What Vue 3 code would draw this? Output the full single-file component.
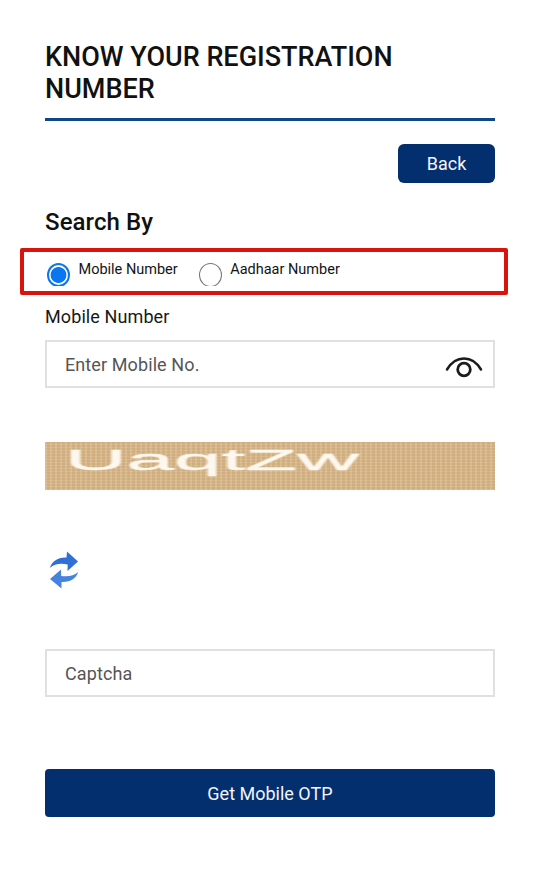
<script setup>
const radios = [
  { label: 'Mobile Number', checked: true },
  { label: 'Aadhaar Number', checked: false }
]
</script>

<template>
  <main class="page">
    <h1 class="title">KNOW YOUR REGISTRATION NUMBER</h1>
    <div class="rule"></div>
    <div class="back-row"><button class="back" type="button">Back</button></div>
    <h2 class="search">Search By</h2>
    <div class="radio-box">
      <div v-for="r in radios" :key="r.label" class="radio-item">
        <span class="radio-clip"><span class="radio" :class="{ on: r.checked }"></span></span>
        <span class="radio-label">{{ r.label }}</span>
      </div>
    </div>
    <label class="field-label">Mobile Number</label>
    <div class="input">
      <span class="placeholder">Enter Mobile No.</span>
      <svg class="eye" viewBox="0 0 38 24" width="38" height="24" fill="none" stroke="#1b1b1b">
        <path d="M2 14.500C6.500 7 12 3.500 19 3.500s12.500 3.500 17 11" stroke-width="2.500" stroke-linecap="round"/>
        <circle cx="19" cy="14.500" r="6.300" stroke-width="2.800"/>
      </svg>
    </div>
    <div class="captcha"><span class="captcha-text">UaqtZw</span></div>
    <svg class="refresh" viewBox="0 0 30 38" width="30" height="38">
      <path fill="#2f70d6" d="M1 17C2.500 10.500 9 6 17.500 6.500L18 .5 29 10.500 18.500 20l.2-6.500C11 12 5.500 13 1 17z"/>
      <path fill="#4683de" d="M29 21C27.500 27.500 21 31.500 12.500 31L12.500 37.500 1 28l11-9.500 .2 6.500C19 26 25 25 29 21z"/>
    </svg>
    <div class="input captcha-input"><span class="placeholder">Captcha</span></div>
    <button class="otp" type="button">Get Mobile OTP</button>
  </main>
</template>

<style scoped>
.page {
  box-sizing: border-box;
  width: 540px;
  height: 894px;
  padding: 41px 45px 0;
  background: #fff;
  font-family: Roboto, "Liberation Sans", sans-serif;
  color: #111;
  overflow: hidden;
}
.title {
  margin: 0;
  font-size: 27px;
  line-height: 32px;
  font-weight: 500;
  color: #111;
}
.rule {
  height: 3px;
  margin-top: 13px;
  background: #0f4688;
}
.back-row {
  display: flex;
  justify-content: flex-end;
  margin-top: 23px;
}
.back {
  width: 97px;
  height: 39px;
  padding: 0;
  border: 0;
  border-radius: 6px;
  background: #042f6f;
  color: #f2f5fa;
  font: 400 18px Roboto, sans-serif;
}
.search {
  margin: 25px 0 0;
  font-size: 24px;
  line-height: 28px;
  letter-spacing: .1px;
  font-weight: 500;
  color: #111;
}
.radio-box {
  box-sizing: border-box;
  display: flex;
  gap: 21px;
  height: 47px;
  margin: 12px -13px 0 -25px;
  padding: 9px 0 0 23px;
  border: 4px solid #d8140c;
  border-radius: 2px;
}
.radio-item {
  display: flex;
  gap: 8px;
  align-items: flex-start;
}
.radio-clip {
  display: block;
  width: 23.500px;
  height: 23px;
  margin-top: 2px;
  overflow: hidden;
}
.radio {
  display: block;
  box-sizing: border-box;
  width: 23px;
  height: 24px;
  border: 1.500px solid #767676;
  border-radius: 50%;
  background: #fff;
}
.radio.on {
  border: 2px solid #0a76f0;
  background: radial-gradient(circle, #0a76f0 0 7.500px, #fff 8.300px);
}
.radio-label {
  font-size: 14.500px;
  line-height: 17px;
  color: #141414;
}
.field-label {
  display: block;
  margin-top: 11px;
  font-size: 18px;
  line-height: 22px;
  letter-spacing: .1px;
  color: #181818;
}
.input {
  box-sizing: border-box;
  display: flex;
  align-items: center;
  justify-content: space-between;
  height: 48px;
  margin-top: 12px;
  padding: 0 10px 0 18px;
  border: 2px solid #e0e0e0;
}
.placeholder {
  font-size: 18px;
  letter-spacing: .1px;
  color: #555;
}
.eye {
  margin-top: 5px;
}
.captcha {
  height: 48px;
  margin-top: 54px;
  overflow: hidden;
  background-color: #d6b689;
  background-image:
    repeating-linear-gradient(90deg, rgba(255,240,205,.12) 0 2px, rgba(150,110,60,.06) 2px 5px),
    repeating-linear-gradient(0deg, rgba(255,240,205,.08) 0 1px, rgba(150,110,60,.06) 1px 3px);
}
.captcha-text {
  display: block;
  width: max-content;
  margin: 2px 0 0 20px;
  font: 400 29px/32px "Liberation Sans", sans-serif;
  color: #fdf8ef;
  -webkit-text-stroke: .4px #fdf8ef;
  filter: blur(.4px);
  transform: scaleX(2.940);
  transform-origin: left top;
}
.refresh {
  display: block;
  margin: 61px 0 0 4px;
}
.captcha-input {
  margin-top: 60px;
}
.otp {
  display: block;
  width: 100%;
  height: 48px;
  margin-top: 72px;
  padding: 0;
  border: 0;
  border-radius: 4px;
  background: #042f6f;
  color: #f2f5fa;
  font: 400 18px Roboto, sans-serif;
}
</style>
